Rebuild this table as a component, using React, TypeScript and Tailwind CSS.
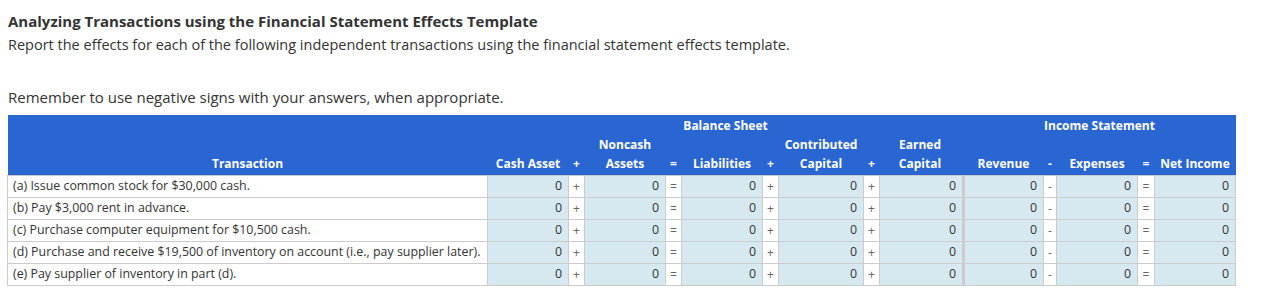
import React from "react";

const rows = [
  "(a) Issue common stock for $30,000 cash.",
  "(b) Pay $3,000 rent in advance.",
  "(c) Purchase computer equipment for $10,500 cash.",
  "(d) Purchase and receive $19,500 of inventory on account (i.e., pay supplier later).",
  "(e) Pay supplier of inventory in part (d).",
];

// each body row: value / operator pairs after the transaction cell
const cells: { op?: string; thick?: boolean }[] = [
  { op: "+" },
  { op: "=" },
  { op: "+" },
  { op: "+" },
  { thick: true },
  { op: "-" },
  { op: "=" },
  {},
];

function ValueCell({ thick }: { thick?: boolean }) {
  return (
    <td
      className={
        "h-[22px] bg-[#d7e9f0] border-y border-l border-[#cccccc] pr-[6px] text-right text-[#333333] text-[12.4px] " +
        (thick ? "border-r-[3px] border-r-[#cccccc]" : "border-r")
      }
    >
      0
    </td>
  );
}

function OpCell({ op }: { op: string }) {
  return (
    <td className="h-[22px] bg-white border border-[#cccccc] text-center text-[#666666] text-[12px]">{op}</td>
  );
}

export default function App() {
  return (
    <div className="bg-white w-[1264px] h-[296px] px-[8px] pt-[11px] text-[#333333] font-['Open_Sans',sans-serif]">
      <h1 className="text-[15px] font-bold leading-[20px]">Analyzing Transactions using the Financial Statement Effects Template</h1>
      <p className="text-[14.5px] leading-[24px] mt-[2px]">
        Report the effects for each of the following independent transactions using the financial statement effects template.
      </p>
      <p className="text-[15px] leading-[24px] mt-[28px]">Remember to use negative signs with your answers, when appropriate.</p>

      <table className="table-fixed border-collapse mt-[6px] -ml-px text-[12.4px]">
        <colgroup>
          <col className="w-[480px]" />
          <col className="w-[81px]" />
          <col className="w-[16px]" />
          <col className="w-[81px]" />
          <col className="w-[16px]" />
          <col className="w-[81px]" />
          <col className="w-[16px]" />
          <col className="w-[85px]" />
          <col className="w-[16px]" />
          <col className="w-[84px]" />
          <col className="w-[80px]" />
          <col className="w-[13px]" />
          <col className="w-[81px]" />
          <col className="w-[17px]" />
          <col className="w-[81px]" />
        </colgroup>
        <thead className="bg-[#2a66d1] text-white text-[12px] font-bold">
          <tr className="h-[20px]">
            <th></th>
            <th colSpan={9} className="text-center align-bottom leading-[19px]">Balance Sheet</th>
            <th colSpan={5} className="text-center align-bottom leading-[19px]">Income Statement</th>
          </tr>
          <tr className="h-[40px] leading-[19px]">
            <th className="align-bottom pb-[2px] text-center">Transaction</th>
            <th className="align-bottom pb-[2px] text-center">Cash Asset</th>
            <th className="align-bottom pb-[2px] text-center">+</th>
            <th className="align-bottom pb-[2px] text-center">Noncash<br />Assets</th>
            <th className="align-bottom pb-[2px] text-center">=</th>
            <th className="align-bottom pb-[2px] text-center">Liabilities</th>
            <th className="align-bottom pb-[2px] text-center">+</th>
            <th className="align-bottom pb-[2px] text-center">Contributed<br />Capital</th>
            <th className="align-bottom pb-[2px] text-center">+</th>
            <th className="align-bottom pb-[2px] text-center pr-[3px]">Earned<br />Capital</th>
            <th className="align-bottom pb-[2px] text-center">Revenue</th>
            <th className="align-bottom pb-[2px] text-center">-</th>
            <th className="align-bottom pb-[2px] text-center">Expenses</th>
            <th className="align-bottom pb-[2px] text-center">=</th>
            <th className="align-bottom pb-[2px] text-center">Net Income</th>
          </tr>
        </thead>
        <tbody>
          {rows.map((r) => (
            <tr key={r}>
              <td className="h-[22px] border border-[#cccccc] pl-[5px] whitespace-nowrap">{r}</td>
              {cells.map((c, i) => (
                <React.Fragment key={i}>
                  <ValueCell thick={c.thick} />
                  {c.op && <OpCell op={c.op} />}
                </React.Fragment>
              ))}
            </tr>
          ))}
        </tbody>
      </table>
    </div>
  );
}
